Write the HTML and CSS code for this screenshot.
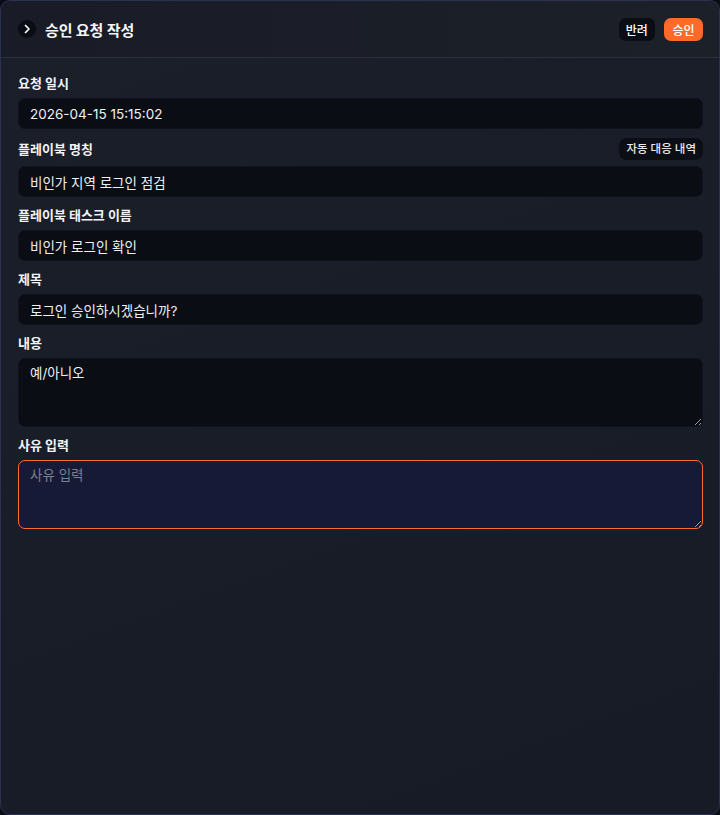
FILE: index.html
```html
<!DOCTYPE html>
<html lang="ko">
<head>
<meta charset="utf-8">
<link rel="stylesheet" href="styles.css">
</head>
<body>
<div class="panel">
  <header class="head">
    <div class="head-left">
      <span class="chev"><svg width="8" height="10" viewBox="0 0 8 10"><path d="M2.5 1.5 L6 5 L2.5 8.5" fill="none" stroke="#fff" stroke-width="1.7" stroke-linecap="round" stroke-linejoin="round"/></svg></span>
      <h1 class="title">승인 요청 작성</h1>
    </div>
    <div class="head-actions">
      <button class="btn btn-dark">반려</button>
      <button class="btn btn-orange">승인</button>
    </div>
  </header>
  <div class="body">
    <div class="field">
      <div class="label-row"><label class="label">요청 일시</label></div>
      <input class="input" value="2026-04-15 15:15:02" readonly>
    </div>
    <div class="field">
      <div class="label-row"><label class="label">플레이북 명칭</label><span class="badge">자동 대응 내역</span></div>
      <input class="input" value="비인가 지역 로그인 점검" readonly>
    </div>
    <div class="field">
      <div class="label-row"><label class="label">플레이북 태스크 이름</label></div>
      <input class="input" value="비인가 로그인 확인" readonly>
    </div>
    <div class="field">
      <div class="label-row"><label class="label">제목</label></div>
      <input class="input" value="로그인 승인하시겠습니까?" readonly>
    </div>
    <div class="field">
      <div class="label-row"><label class="label">내용</label></div>
      <textarea class="textarea" readonly>예/아니오</textarea>
    </div>
    <div class="field">
      <div class="label-row"><label class="label">사유 입력</label></div>
      <textarea class="textarea reason" placeholder="사유 입력"></textarea>
    </div>
  </div>
</div>
</body>
</html>
```
FILE: styles.css
```css
* { box-sizing: border-box; }
html, body { margin: 0; padding: 0; background: #0b0d14; }
body {
  width: 720px;
  height: 815px;
  font-family: Inter, "Noto Sans CJK KR", sans-serif;
  color: #f2f3f5;
}
.panel {
  width: 720px;
  height: 815px;
  border: 1px solid #2a3152;
  border-radius: 10px;
  background: linear-gradient(160deg, #1b1f29 0%, #191d27 50%, #171b26 100%);
  overflow: hidden;
  display: flex;
  flex-direction: column;
}
.head {
  height: 57px;
  flex: none;
  border-bottom: 1px solid #2b3040;
  display: flex;
  align-items: center;
  justify-content: space-between;
  padding: 0 16px 0 17px;
  background: linear-gradient(90deg, #191c26 0%, #1c2029 100%);
}
.head-left { display: flex; align-items: center; gap: 9px; }
.chev {
  width: 18px; height: 18px;
  border-radius: 50%;
  background: #0a0d14;
  display: flex; align-items: center; justify-content: center;
}
.title {
  margin: 0;
  font-size: 15px;
  font-weight: 700;
  color: #f4f5f7;
  letter-spacing: -0.1px;
}
.head-actions { display: flex; gap: 9px; align-items: center; }
.btn {
  height: 23px;
  border: none;
  border-radius: 7px;
  padding: 0 7px;
  font-family: Inter, "Noto Sans CJK KR", sans-serif;
  font-size: 12px;
  font-weight: 500;
  color: #fff;
}
.btn-dark { background: #0a0d14; }
.btn-orange { background: #ff6a2b; padding: 0 8.5px; }
.body {
  padding: 16px 16px 0 17px;
  display: flex;
  flex-direction: column;
  gap: 9px;
}
.field { display: flex; flex-direction: column; gap: 6px; }
.label-row {
  display: flex;
  align-items: center;
  justify-content: space-between;
  min-height: 18px;
}
.label {
  font-size: 13px;
  font-weight: 700;
  line-height: 18px;
  color: #f2f3f5;
}
.badge {
  height: 22px;
  line-height: 22px;
  padding: 0 7px;
  border-radius: 8px;
  background: #0b0e15;
  font-size: 11.5px;
  font-weight: 500;
  color: #e9eaee;
}
.input, .textarea {
  width: 100%;
  background: #0a0d14;
  border: 1px solid #0f1320;
  border-radius: 7px;
  color: #eef0f3;
  font-family: Inter, "Noto Sans CJK KR", sans-serif;
  font-size: 13.5px;
  outline: none;
}
.input {
  height: 31px;
  padding: 0 11px;
}
.textarea {
  height: 69px;
  padding: 5px 11px;
  line-height: 18px;
  resize: vertical;
  display: block;
}
.reason {
  background: #171a36;
  border: 1px solid #ff6a2b;
}
.reason::placeholder { color: #7c8090; }
```
